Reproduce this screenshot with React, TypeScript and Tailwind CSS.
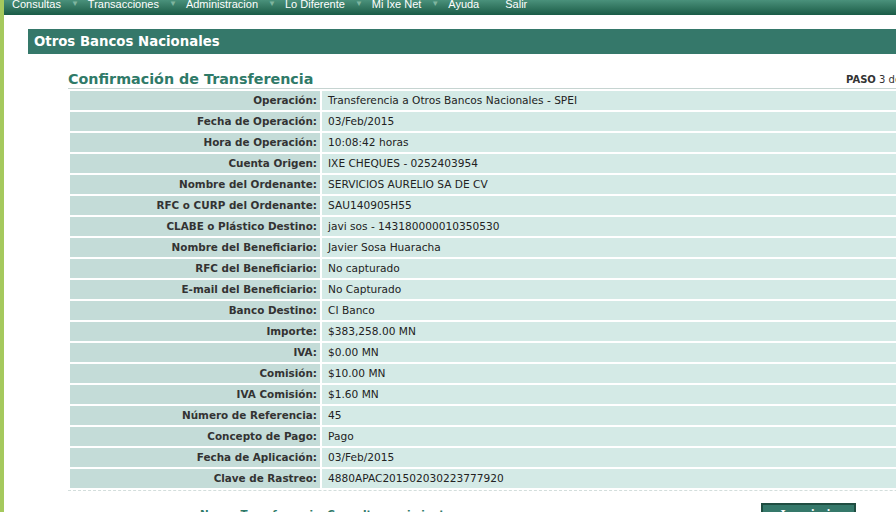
import React from "react";

const rows: [string, string][] = [
  ["Operación:", "Transferencia a Otros Bancos Nacionales - SPEI"],
  ["Fecha de Operación:", "03/Feb/2015"],
  ["Hora de Operación:", "10:08:42 horas"],
  ["Cuenta Origen:", "IXE CHEQUES - 0252403954"],
  ["Nombre del Ordenante:", "SERVICIOS AURELIO SA DE CV"],
  ["RFC o CURP del Ordenante:", "SAU140905H55"],
  ["CLABE o Plástico Destino:", "javi sos - 143180000010350530"],
  ["Nombre del Beneficiario:", "Javier Sosa Huaracha"],
  ["RFC del Beneficiario:", "No capturado"],
  ["E-mail del Beneficiario:", "No Capturado"],
  ["Banco Destino:", "CI Banco"],
  ["Importe:", "$383,258.00 MN"],
  ["IVA:", "$0.00 MN"],
  ["Comisión:", "$10.00 MN"],
  ["IVA Comisión:", "$1.60 MN"],
  ["Número de Referencia:", "45"],
  ["Concepto de Pago:", "Pago"],
  ["Fecha de Aplicación:", "03/Feb/2015"],
  ["Clave de Rastreo:", "4880APAC201502030223777920"],
];

const nav = ["Consultas", "Transacciones", "Administracion", "Lo Diferente", "Mi Ixe Net", "Ayuda", "Salir"];

export default function App() {
  return (
    <div className="w-[896px] h-[512px] overflow-hidden bg-white flex" style={{ fontFamily: '"DejaVu Sans", Verdana, sans-serif' }}>
      <div className="w-[4px] shrink-0 bg-[#a5c95d]" />
      <div className="flex-1 min-w-0 flex flex-col">
        <div className="h-[15px] shrink-0 overflow-hidden bg-gradient-to-b from-[#4a917b] to-[#1a5c47] flex items-start pl-[8px]">
          {nav.map((n, i) => (
            <div key={n} className="flex items-center -mt-[4px] text-[11px] leading-[16px] text-white shrink-0" style={{ fontFamily: '"Liberation Sans", Arial, sans-serif' }}>
              <span>{n}</span>
              {i < 5 ? (
                <span className="text-[8px] text-[#7fb59f] ml-[10px] mr-[9px]">▼</span>
              ) : (
                <span className="w-[26px]" />
              )}
            </div>
          ))}
        </div>
        <div className="pt-[14px] pl-[24px]">
          <div className="w-[1000px] h-[25px] bg-[#35786a] flex items-center pl-[6px] text-white font-bold text-[13.3px]">
            Otros Bancos Nacionales
          </div>
          <div className="pl-[40px]">
            <div className="flex items-end h-[34px] pb-[0px]">
              <div className="w-[778px] shrink-0 text-[14.3px] font-bold text-[#2f7a68] leading-[18px]">Confirmación de Transferencia</div>
              <div className="text-[10px] text-[#333] leading-[14px] whitespace-nowrap pb-[1px] shrink-0">
                <span className="font-bold">PASO</span> 3 de 3
              </div>
            </div>
            <div className="w-[1000px] border-t border-[#c6d4d1]">
              <table className="w-full border-separate border-spacing-[2px]">
                <tbody>
                  {rows.map(([l, v]) => (
                    <tr key={l} className="h-[19px]">
                      <td className="w-[250px] bg-[#c4dcd8] text-right pr-[3px] font-bold text-[#333] whitespace-nowrap p-0 text-[10.4px]">{l}</td>
                      <td className="bg-[#d4eae6] pl-[6px] text-[#222] whitespace-nowrap p-0 text-[10.6px]">{v}</td>
                    </tr>
                  ))}
                </tbody>
              </table>
            </div>
            <div className="w-[1000px] border-t border-dashed border-[#d3dedc]" />
            <div className="flex items-start pt-[12px]">
              <div className="w-[693px] shrink-0 pl-[132px] text-[10.4px] font-bold text-[#2f7a68] pt-[4px] leading-[14px] whitespace-nowrap">
                Nueva Transferencia&nbsp; Consulta movimientos
              </div>
              <button className="w-[95px] h-[24px] shrink-0 bg-[#35786a] border-2 border-[#1f4d41] text-white font-bold text-[11px] pt-[2px] items-start flex justify-center" style={{ fontFamily: '"DejaVu Serif", serif' }}>
                Imprimir
              </button>
            </div>
          </div>
        </div>
      </div>
    </div>
  );
}
